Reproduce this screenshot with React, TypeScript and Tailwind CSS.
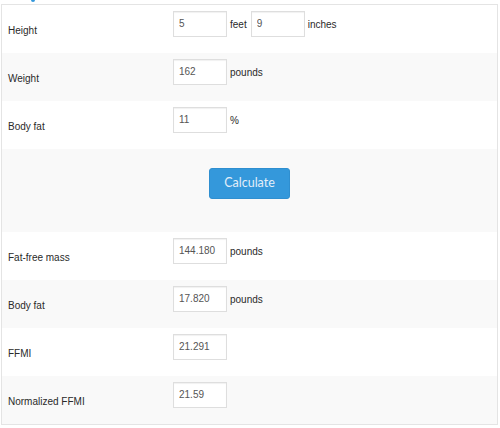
import React from "react"

type Row = {
    label: string
    fields: { value: string; unit?: string }[]
}

const inputRows: Row[] = [
    { label: "Height", fields: [{ value: "5", unit: "feet" }, { value: "9", unit: "inches" }] },
    { label: "Weight", fields: [{ value: "162", unit: "pounds" }] },
    { label: "Body fat", fields: [{ value: "11", unit: "%" }] },
]

const resultRows: Row[] = [
    { label: "Fat-free mass", fields: [{ value: "144.180", unit: "pounds" }] },
    { label: "Body fat", fields: [{ value: "17.820", unit: "pounds" }] },
    { label: "FFMI", fields: [{ value: "21.291" }] },
    { label: "Normalized FFMI", fields: [{ value: "21.59" }] },
]

function FormRow({ row, striped }: { row: Row; striped: boolean }) {
    return (
        <div className={`flex h-[48px] ${striped ? "bg-[#f9f9f9]" : "bg-white"}`}>
            <div className="w-[171px] pl-[6px] pt-[2px] flex items-center text-[#2a2a2a]">{row.label}</div>
            <div className="flex items-center gap-[3px] h-[26px] mt-[6px]">
                {row.fields.map((f, i) => (
                    <React.Fragment key={i}>
                        <input
                            readOnly
                            value={f.value}
                            className="w-[54px] h-[26px] px-[5px] pb-[1px] border border-[#dedede] bg-white text-[#555] outline-none shadow-[inset_0_1px_1px_rgba(0,0,0,0.06)]"
                        />
                        {f.unit && <span className="text-[#2a2a2a] mr-[1px]">{f.unit}</span>}
                    </React.Fragment>
                ))}
            </div>
        </div>
    )
}

export default function App() {
    return (
        <div className="w-[500px] h-[428px] bg-white text-[10px] font-['Liberation_Sans',Arial,sans-serif]">
            {/* tail of the blue heading above, cut by the crop */}
            <div className="h-[4px] pl-[31px]">
                <div className="w-[4px] h-[2px] rounded-b-[2px] bg-[#3498db]" />
            </div>
            <div className="ml-[1px] w-[497px] border border-[#e4e4e4]">
                {inputRows.map((r, i) => (
                    <FormRow key={i} row={r} striped={i % 2 === 1} />
                ))}
                <div className="h-[83px] bg-[#f9f9f9] flex justify-center pt-[19px]">
                    <button className="w-[81px] h-[31px] rounded-[3px] bg-[#3498db] text-[#e3eef9] text-[12.5px] font-['Lato',sans-serif] border border-[#2f8fd0]">
                        Calculate
                    </button>
                </div>
                {resultRows.map((r, i) => (
                    <FormRow key={i} row={r} striped={i % 2 === 1} />
                ))}
            </div>
        </div>
    )
}
